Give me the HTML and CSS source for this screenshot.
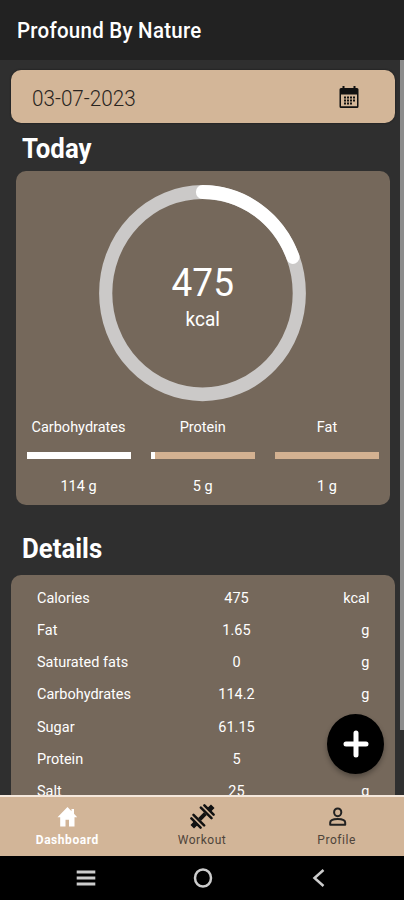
FILE: index.html
```html
<!DOCTYPE html>
<html lang="en">
<head>
<meta charset="utf-8">
<title>Profound By Nature</title>
<link rel="stylesheet" href="styles.css">
</head>
<body>
<div class="phone">
  <header class="appbar"><h1 class="t">Profound By Nature</h1></header>
  <main class="content">
    <div class="date-field">
      <span class="t">03-07-2023</span>
      <svg class="calendar" viewBox="0 0 20 23" width="20" height="23">
        <path fill="#111" fill-rule="evenodd" d="M3.500 0h2v2h9V0h2v2H18q1.500 0 1.500 1.500V20.500Q19.500 22 18 22H2Q.5 22 .5 20.500V3.500Q.5 2 2 2h1.500zM2 8.500v11.800h16V8.500z"/>
        <path fill="#111" d="M8 10.500h2v2H8zm3 0h2v2h-2zm3 0h2v2h-2zM5 10.500h2v2H5zM5 13.500h2v2H5zm3 0h2v2H8zm3 0h2v2h-2zm3 0h2v2h-2zM5 16.500h2v2H5zm3 0h2v2H8zm3 0h2v2h-2z"/>
      </svg>
    </div>
    <h2 class="heading heading-today"><span class="t">Today</span></h2>
    <section class="summary">
      <div class="ring">
        <svg viewBox="0 0 207 217" width="207" height="217" preserveAspectRatio="none">
          <g transform="scale(1 1.045)" fill="none" stroke-width="13.200">
            <circle cx="103.500" cy="103.500" r="96.800" stroke="#cbc9c8"/>
            <path d="M103.500 6.700A96.800 96.800 0 0 1 193.900 68.900" stroke="#fff" stroke-linecap="round"/>
          </g>
        </svg>
        <div class="ring-label">
          <span class="kcal-value t">475</span>
          <span class="kcal-unit t">kcal</span>
        </div>
      </div>
      <div class="macros">
        <div class="macro"><span class="t">Carbohydrates</span><div class="bar"><i style="width:100%"></i></div><span class="t">114 g</span></div>
        <div class="macro"><span class="t">Protein</span><div class="bar"><i style="width:4%"></i></div><span class="t">5 g</span></div>
        <div class="macro"><span class="t">Fat</span><div class="bar"><i style="width:0%"></i></div><span class="t">1 g</span></div>
      </div>
    </section>
    <h2 class="heading heading-details"><span class="t">Details</span></h2>
    <section class="details">
      <div class="row"><span class="t">Calories</span><span class="t">475</span><span class="t">kcal</span></div>
      <div class="row"><span class="t">Fat</span><span class="t">1.65</span><span class="t">g</span></div>
      <div class="row"><span class="t">Saturated fats</span><span class="t">0</span><span class="t">g</span></div>
      <div class="row"><span class="t">Carbohydrates</span><span class="t">114.2</span><span class="t">g</span></div>
      <div class="row"><span class="t">Sugar</span><span class="t">61.15</span><span class="t"></span></div>
      <div class="row"><span class="t">Protein</span><span class="t">5</span><span class="t"></span></div>
      <div class="row"><span class="t">Salt</span><span class="t">25</span><span class="t">g</span></div>
    </section>
    <div class="scrollbar"></div>
    <button class="fab" aria-label="Add">
      <svg viewBox="0 0 26 28" width="26" height="28"><path d="M13 3v22M3 14h20" stroke="#fff" stroke-width="5" stroke-linecap="round"/></svg>
    </button>
  </main>
  <nav class="tabs">
    <div class="tab active">
      <svg viewBox="0 0 26 27" width="26" height="27"><path fill="#fff" d="M13.500 4 3.500 14.200H6.200V23.500H11.500V16.800H15V23.500H20.500V14.200H23.200L20 10.800V6H17.500V8.200z"/></svg>
      <span>Dashboard</span>
    </div>
    <div class="tab">
      <svg viewBox="0 0 26 27" width="26" height="27">
        <g transform="translate(13.500 13.500) rotate(-45)" stroke="#111" fill="none">
          <path d="M-4 0H4" stroke-width="4"/>
          <path d="M-5.200 -7.500V7.500M5.200 -7.500V7.500M-9.200 -6.500V6.500M9.200 -6.500V6.500" stroke-width="2.500" stroke-linecap="round"/>
          <path d="M-14.500 0H-9M9 0H14.500" stroke-width="5"/>
        </g>
      </svg>
      <span>Workout</span>
    </div>
    <div class="tab">
      <svg viewBox="0 0 26 27" width="26" height="27" fill="none" stroke="#222" stroke-width="2"><ellipse cx="13.700" cy="9.300" rx="3.600" ry="3.900"/><path d="M6.200 21.800V19.500C6.200 17.300 9.500 15.900 13.700 15.900S21.200 17.300 21.200 19.500V21.800z" stroke-linejoin="round"/></svg>
      <span>Profile</span>
    </div>
  </nav>
  <footer class="system">
    <div><svg viewBox="0 0 20 18" width="20" height="18"><path d="M.7 3H19.300M.7 9H19.300M.7 15H19.300" stroke="#ccc" stroke-width="2.900"/></svg></div>
    <div><svg viewBox="0 0 20 20" width="20" height="20"><ellipse cx="10" cy="10" rx="8" ry="8.600" fill="none" stroke="#ccc" stroke-width="2.500"/></svg></div>
    <div><svg viewBox="0 0 20 20" width="20" height="20"><path d="M14.500 2 5.500 10l9 8" fill="none" stroke="#ccc" stroke-width="2.500"/></svg></div>
  </footer>
</div>
</body>
</html>
```

FILE: styles.css
```css
* { box-sizing: border-box; }
body { margin: 0; background: #000; font-family: Roboto, "Liberation Sans", sans-serif; color: #fff; }
h1, h2 { margin: 0; }
.t { display: block; transform: scaleY(1.05); white-space: nowrap; }
.phone { width: 404px; height: 900px; display: flex; flex-direction: column; overflow: hidden; }
.appbar { height: 60px; flex: none; background: #222; padding: 19px 17px 0; }
.appbar h1 { font-size: 20.500px; letter-spacing: .25px; line-height: 24px; font-weight: 500; }
.content { position: relative; height: 735px; flex: none; background: #2f2f2f; overflow: hidden; padding: 10px 9.500px 0 11px; }
.date-field { height: 53px; border-radius: 10px; background: #d3b698; color: #292420; display: flex; align-items: center; justify-content: space-between; padding: 4px 36px 0 21px; font-size: 20.700px; font-weight: 300; box-shadow: 0 0 2px #151515; }
.calendar { margin-top: -2px; }
.heading { font-size: 25.800px; line-height: 30px; font-weight: 700; padding-left: 11px; width: max-content; }
.heading-today { margin-top: 11px; height: 37px; }
.summary { margin: 0 5px; height: 334px; border-radius: 10px; background: #75685b; padding: 14px 10.500px 0; }
.ring { position: relative; width: 207px; height: 217px; margin: 0 auto; }
.ring svg { display: block; }
.ring-label { position: absolute; inset: 0; display: flex; flex-direction: column; align-items: center; padding-top: 76px; }
.kcal-value { font-size: 37px; line-height: 44px; }
.kcal-unit { font-size: 19px; line-height: 24px; margin-top: 3px; }
.macros { display: grid; grid-template-columns: repeat(3, 104px); justify-content: space-between; margin-top: 16px; }
.macro { display: flex; flex-direction: column; align-items: center; font-size: 14.500px; line-height: 20px; }
.bar { width: 104px; height: 7px; background: #d3b191; margin: 14px 0 18px; }
.bar i { display: block; height: 100%; background: #fff; }
.heading-details { margin-top: 28.500px; height: 41.500px; }
.details { height: 240px; border-radius: 10px 10px 0 0; background: #75685b; padding: 7.500px 25px 0 26px; font-size: 14.500px; line-height: 32.300px; }
.row { display: grid; grid-template-columns: 120px 159px 1fr; height: 32.300px; }
.row span:nth-child(2) { text-align: center; }
.row span:nth-child(3) { text-align: right; }
.scrollbar { position: absolute; right: 0; top: 0; width: 4px; height: 670px; background: #8c8c8c; }
.fab { position: absolute; left: 327px; top: 654px; width: 57px; height: 60px; border: 0; border-radius: 50%; background: #000; display: flex; align-items: center; justify-content: center; padding: 0; box-shadow: 0 3px 5px rgba(0,0,0,.3); }
.tabs { height: 61px; flex: none; background: #d2b598; border-top: 2px solid #f5e8dc; display: grid; grid-template-columns: repeat(3, 1fr); }
.tab { display: flex; flex-direction: column; align-items: center; padding-top: 6px; font-size: 12px; line-height: 14px; letter-spacing: .55px; color: #4f443a; }
.tab span { margin-top: 3px; }
.tab.active { color: #fff; font-weight: 700; }
.system { flex: 1; background: #000; display: grid; grid-template-columns: 172px 61px 171px; align-items: center; justify-items: center; }
.system svg { display: block; }
```
